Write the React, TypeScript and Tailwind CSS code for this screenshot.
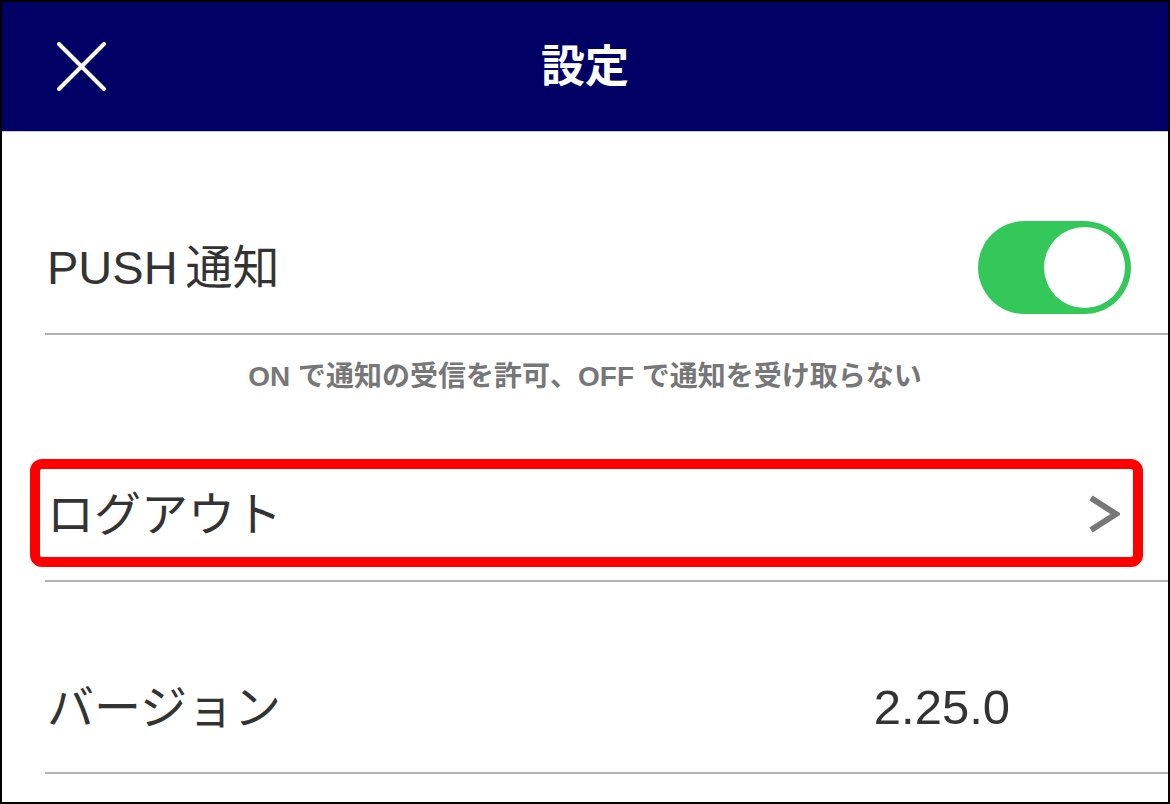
import React from "react";

const font = { fontFamily: '"Liberation Sans", "Noto Sans CJK JP", sans-serif' };

const Settings = () => {
  return (
    <div
      className="relative h-[804px] w-[1170px] overflow-hidden border-2 border-black bg-white text-[#333333]"
      style={font}
    >
      {/* Header */}
      <header className="flex h-[130px] items-center border-b border-[#c9c9d6] bg-[#010064]">
        <div className="flex w-[160px] items-center pl-[55px]">
          <svg width="49" height="49" viewBox="0 0 49 49" fill="none">
            <path
              d="M2 2 L47 47 M47 2 L2 47"
              stroke="white"
              strokeWidth="4"
              strokeLinecap="round"
            />
          </svg>
        </div>
        <h1 className="flex-1 text-center text-[44px] font-bold leading-none text-white">
          設定
        </h1>
        <div className="w-[160px]" />
      </header>

      {/* PUSH */}
      <div className="ml-[43px] mt-[69px] flex h-[134px] items-center justify-between border-b-2 border-[#b2b2b2]">
        <span className="pl-[2px] text-[47px] leading-none">
          PUSH<span className="pl-[8px]">通知</span>
        </span>
        <div className="mr-[37px] flex h-[93px] w-[153px] items-center justify-end rounded-full bg-[#34c759] p-[6px]">
          <div className="h-[81px] w-[81px] rounded-full bg-white" />
        </div>
      </div>
      <div className="h-[113px] pt-[22px] text-center text-[28px] font-bold leading-[39px] text-[#777777]">
        ON で通知の受信を許可、OFF で通知を受け取らない
      </div>

      {/* Logout */}
      <div className="relative ml-[43px] flex h-[134px] items-center justify-between border-b-2 border-[#b2b2b2] pr-[48px]">
        <span className="pl-[2px] text-[47px] leading-none">ログアウト</span>
        <svg width="32" height="40" viewBox="0 0 32 40" fill="none">
          <path d="M3 4 L28 20 L3 36" stroke="#777777" strokeWidth="6" />
        </svg>
        <div className="pointer-events-none absolute left-[-15px] top-[11px] h-[108px] w-[1113px] rounded-[12px] border-[10px] border-[#ff0000]" />
      </div>

      {/* Version */}
      <div className="ml-[43px] mt-[60px] flex h-[132px] items-center justify-between border-b-2 border-[#b2b2b2] pr-[158px]">
        <span className="pl-[2px] text-[47px] leading-none">バージョン</span>
        <span className="text-[49px] leading-none">2.25.0</span>
      </div>
    </div>
  );
};

export default function App() {
  return <Settings />;
}
